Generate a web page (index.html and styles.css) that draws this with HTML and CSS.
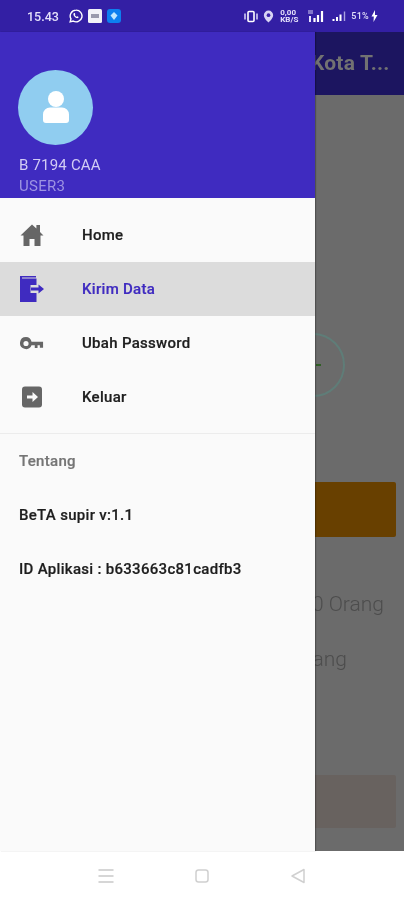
FILE: index.html
```html
<!DOCTYPE html>
<html lang="id">
<head>
<meta charset="utf-8">
<title>BeTA supir</title>
<link rel="stylesheet" href="styles.css">
</head>
<body>
<div class="screen">
  <div class="status">
    <div class="status-left">
      <span class="time">15.43</span>
      <svg class="ic14" viewBox="0 0 24 24"><path d="M12 2a10 10 0 0 0-8.600 15L2 22l5.200-1.400A10 10 0 1 0 12 2z" fill="none" stroke="#fff" stroke-width="2.400"/><path d="M8.500 7c-1.500 1.200-1.200 3.500.8 5.800s4.300 3.500 6 2.700c1-.5 1.300-1.400 1.200-2l-2.300-1.200-1 1.100c-1.300-.5-2.700-1.900-3.200-3.200l.9-1L9.800 7z" fill="#fff"/></svg>
      <svg class="ic14" viewBox="0 0 14 14"><rect width="14" height="14" rx="1.500" fill="#f2f2f7"/><rect x="3" y="5" width="8" height="4" fill="#9a9aac"/></svg>
      <svg class="ic14" viewBox="0 0 14 14"><rect width="14" height="14" rx="3" fill="#0d7ff0"/><path d="M7 3l3.500 3.500L7 11 3.500 6.500z" fill="#bfe6ff"/></svg>
    </div>
    <div class="status-right">
      <svg class="sys vib" viewBox="0 0 14 12"><rect x="4" y="1" width="6" height="10" rx="1" fill="none" stroke="#fff" stroke-width="1.600"/><path d="M1 3v6M13 3v6" stroke="#e8e4ff" stroke-width="1.400"/></svg>
      <svg class="sys pin" viewBox="0 0 10 12"><path d="M5 .5a4.300 4.300 0 0 0-4.300 4.300C.7 8 5 11.500 5 11.500S9.300 8 9.300 4.800A4.300 4.300 0 0 0 5 .5z" fill="#d8d4f4"/><circle cx="5" cy="4.800" r="1.700" fill="#3b22aa"/></svg>
      <span class="speed">0,00<br>KB/S</span>
      <svg class="sys sig" viewBox="0 0 18 12"><path d="M1 1h5M1 3h5" stroke="#cfcaf0" stroke-width="1.200"/><path d="M7.500 12V8M11 12V5M15 12V1" stroke="#fff" stroke-width="2.200"/><path d="M3 12V6" stroke="#e8e4ff" stroke-width="2"/></svg>
      <svg class="sys sig2" viewBox="0 0 14 10"><path d="M1.500 10V8M5 10V6M8.500 10V3.500" stroke="#fff" stroke-width="2"/><path d="M12.500 10V.5" stroke="#a9a2e0" stroke-width="1.400"/></svg>
      <span class="batt">51%</span>
      <svg class="bolt" viewBox="0 0 7 12"><path d="M4 0L.5 6.500h2.300L2.500 12 6.500 5H4z" fill="#fff"/></svg>
    </div>
  </div>

  <div class="middle">
    <div class="backdrop">
      <div class="appbar"><span class="app-title">Kota T...</span></div>
      <div class="back-body">
        <div class="ring-row"><div class="ring"><span class="dash"></span></div></div>
        <div class="btn-orange"></div>
        <div class="back-line first">0 Orang</div>
        <div class="back-line second">Orang</div>
        <div class="btn-muted"></div>
      </div>
    </div>

    <aside class="drawer">
      <header class="drawer-head">
        <div class="avatar">
          <svg class="avatar-ic" viewBox="0 0 26 32"><circle cx="13" cy="8" r="8" fill="#fff"/><path d="M7 16.500h12a7 7 0 0 1 7 7V29a3 3 0 0 1-3 3H3a3 3 0 0 1-3-3v-5.500a7 7 0 0 1 7-7z" fill="#fff"/></svg>
        </div>
        <div class="plate">B 7194 CAA</div>
        <div class="user">USER3</div>
      </header>
      <nav class="menu">
        <a class="item">
          <svg class="item-ic" viewBox="0 0 24 24"><path d="M12 1.500L.5 12.500h3V23h6v-7h5v7h6V12.500h3L20 9V2h-3.600v3.500z" fill="#666"/></svg>
          <span>Home</span>
        </a>
        <a class="item active">
          <svg class="item-ic" viewBox="0 0 24 26"><path d="M0 0h16v1.500H2v1h14.500V9h-6v8h6v9H0z" fill="#3f2bc0"/><path d="M11 11.500h7.500V8.500L24 13l-5.500 4.500v-3H11z" fill="#3f2bc0"/></svg>
          <span>Kirim Data</span>
        </a>
        <a class="item">
          <svg class="item-ic key" viewBox="0 0 26 14"><path d="M6.500 0a6.500 6.500 0 1 0 6 9H16v3h3V9h2.500v2.500H25V5H12.500a6.500 6.500 0 0 0-6-5zm0 4.200a2.800 2.800 0 1 1 0 5.600 2.800 2.800 0 0 1 0-5.600z" fill="#666"/></svg>
          <span>Ubah Password</span>
        </a>
        <a class="item">
          <svg class="item-ic" viewBox="0 0 24 24"><rect x="2" y="1.500" width="20" height="21" rx="3" fill="#666"/><path d="M7 10.500h5.500V7l5.500 5-5.500 5v-3.500H7z" fill="#fafafa"/></svg>
          <span>Keluar</span>
        </a>
      </nav>
      <div class="about">
        <div class="about-title">Tentang</div>
        <div class="about-row">BeTA supir v:1.1</div>
        <div class="about-row">ID Aplikasi : b633663c81cadfb3</div>
      </div>
    </aside>
  </div>

  <div class="navbar">
    <svg class="nav-ic" viewBox="0 0 16 16"><path d="M.5 2h15M.5 8h15M.5 14h15" stroke="#d6d6d6" stroke-width="1.800" fill="none"/></svg>
    <svg class="nav-ic" viewBox="0 0 16 16"><rect x="2" y="2" width="12" height="12" rx="2.500" stroke="#d0d0d0" stroke-width="1.500" fill="none"/></svg>
    <svg class="nav-ic" viewBox="0 0 16 16"><path d="M14 1.500v13L2 8z" stroke="#d0d0d0" stroke-width="1.500" stroke-linejoin="round" fill="none"/></svg>
  </div>
</div>
</body>
</html>
```

FILE: styles.css
```css
* { box-sizing: border-box; }
html, body { margin: 0; padding: 0; }
body { font-family: Roboto, "Liberation Sans", sans-serif; background: #fff; }

.screen {
  width: 404px;
  height: 900px;
  display: flex;
  flex-direction: column;
  overflow: hidden;
  filter: blur(0.5px);
}

.status {
  height: 32px;
  flex: none;
  background: #331fa4;
  display: flex;
  align-items: center;
  justify-content: space-between;
  padding: 0 26px 0 27px;
  color: #e4e0fa;
}
.status-left, .status-right { display: flex; align-items: center; }
.status-left { gap: 5px; }
.time { font-size: 12.500px; font-weight: 500; margin-right: 5px; }
.ic14 { width: 14px; height: 14px; display: block; }
.status-right { gap: 2px; }
.sys { display: block; }
.vib { width: 14px; height: 13px; margin-right: 3px; }
.pin { width: 11px; height: 13px; margin-right: 4px; }
.speed { font-size: 8px; line-height: 7.500px; font-weight: 700; margin-right: 7px; width: 18px; white-space: nowrap; }
.sig { width: 18px; height: 12px; margin-right: 5px; }
.sig2 { width: 14px; height: 10px; margin-right: 3px; }
.batt { font-size: 9px; font-weight: 500; letter-spacing: .3px; }
.bolt { width: 7px; height: 12px; display: block; }

.middle { flex: 1; position: relative; min-height: 0; }

.backdrop {
  height: 100%;
  background: #6b6b6b;
  display: flex;
  flex-direction: column;
}
.appbar {
  height: 63px;
  flex: none;
  background: #1c1560;
  display: flex;
  align-items: center;
  padding-left: 311px;
  padding-bottom: 1px;
}
.app-title { color: #727272; font-size: 21px; font-weight: 700; white-space: nowrap; letter-spacing: .2px; }
.back-body { flex: 1; display: flex; flex-direction: column; padding: 0 8px; }
.ring-row { padding: 238px 0 0 273px; }
.ring {
  width: 64px;
  height: 64px;
  border-radius: 50%;
  border: 2px solid #5f7d78;
  display: flex;
  align-items: center;
  justify-content: flex-end;
  padding-right: 22px;
}
.dash { width: 5px; height: 2px; background: #2f5e24; }
.btn-orange { height: 55px; margin-top: 85px; background: #684000; border-radius: 2px; }
.back-line {
  font-size: 21px;
  font-weight: 300;
  color: #4d4d4d;
  line-height: 26px;
  text-align: right;
}
.back-line.first { margin-top: 54px; padding-right: 12px; }
.back-line.second { margin-top: 29px; padding-right: 49px; }
.btn-muted { height: 53px; margin-top: 103px; background: #68625f; border-radius: 2px; }

.drawer {
  position: absolute;
  top: 0;
  bottom: 0;
  left: 0;
  width: 315px;
  background: #fafafa;
  display: flex;
  flex-direction: column;
  box-shadow: 1px 0 1px rgba(0,0,0,.25);
}
.drawer-head {
  height: 166px;
  flex: none;
  background: #3f2bc0;
  padding: 38px 0 0 18px;
}
.avatar {
  width: 75px;
  height: 75px;
  border-radius: 50%;
  background: #90cdf0;
  display: flex;
  align-items: center;
  justify-content: center;
  padding-bottom: 2px;
}
.avatar-ic { width: 26px; height: 32px; display: block; }
.plate { margin: 10px 0 0 1px; font-size: 15px; line-height: 20px; color: #d2ccf4; letter-spacing: .2px; }
.user { margin: 1px 0 0 1px; font-size: 15px; line-height: 20px; color: #9d93e2; letter-spacing: .3px; }

.menu { padding: 10px 0 9px; border-bottom: 1px solid #ececec; }
.item {
  height: 54px;
  display: flex;
  align-items: center;
  padding-left: 20px;
  font-size: 15px;
  font-weight: 500;
  letter-spacing: .3px;
  color: #1e1e1e;
  -webkit-text-stroke: .2px currentColor;
}
.item-ic { width: 24px; height: 26px; margin-right: 38px; display: block; flex: none; }
.item-ic.key { height: 13px; }
.item.active { background: #dcdcdc; color: #3f2bc0; }

.about {
  font-size: 15px;
  font-weight: 500;
  letter-spacing: .3px;
  color: #1e1e1e;
  padding: 0 19px;
  -webkit-text-stroke: .2px currentColor;
}
.about-title { height: 54px; line-height: 54px; color: #757575; }
.about-row { height: 54px; line-height: 54px; white-space: nowrap; }

.navbar {
  height: 49px;
  flex: none;
  background: #fff;
  display: flex;
  align-items: center;
  padding-left: 98px;
  gap: 80px;
}
.nav-ic { width: 16px; height: 16px; display: block; }
```
